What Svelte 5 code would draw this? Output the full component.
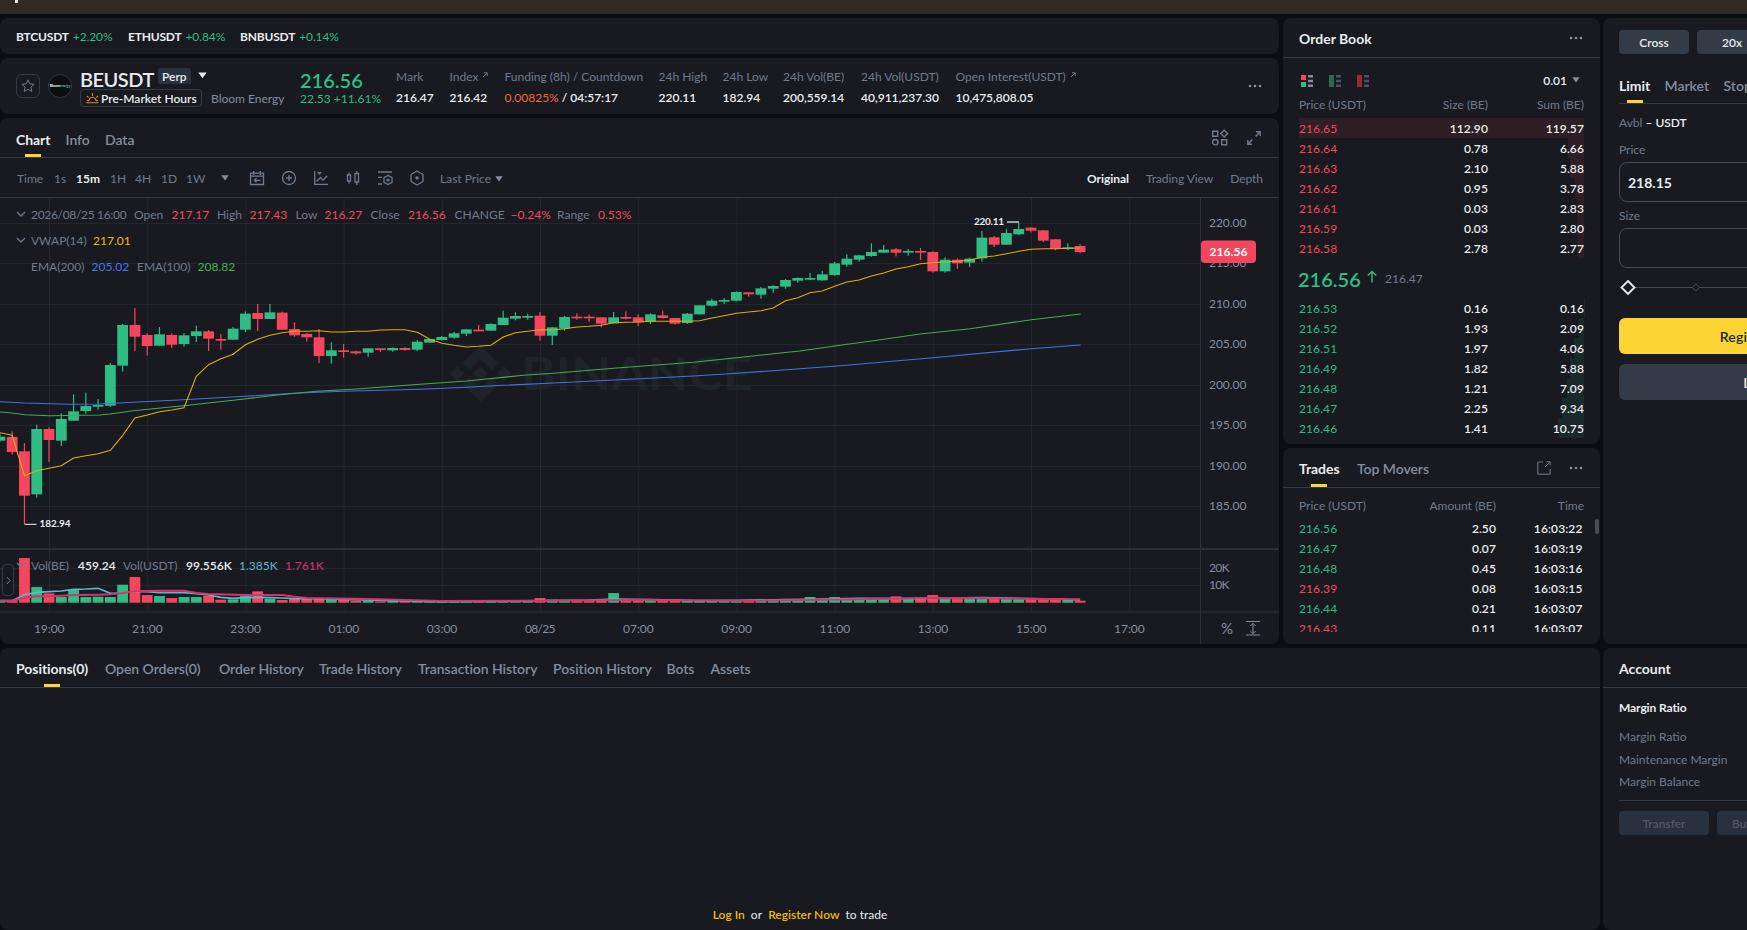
<script>
	const tickers = [
		{ name: 'BTCUSDT', change: '+2.20%' },
		{ name: 'ETHUSDT', change: '+0.84%' },
		{ name: 'BNBUSDT', change: '+0.14%' },
	]

	const stats = [
		{ label: 'Mark', value: '216.47' },
		{ label: 'Index', value: '216.42', link: true },
		{ label: 'Funding (8h) / Countdown', value: '/ 04:57:17', rate: '0.00825%' },
		{ label: '24h High', value: '220.11' },
		{ label: '24h Low', value: '182.94' },
		{ label: '24h Vol(BE)', value: '200,559.14' },
		{ label: '24h Vol(USDT)', value: '40,911,237.30' },
		{ label: 'Open Interest(USDT)', value: '10,475,808.05', link: true },
	]

	const intervals = ['Time', '1s', '15m', '1H', '4H', '1D', '1W']
	const history_tabs = ['Positions(0)', 'Open Orders(0)', 'Order History', 'Trade History', 'Transaction History', 'Position History', 'Bots', 'Assets']

	const asks = [
		{ price: '216.65', size: '112.90', sum: '119.57', depth: 285 },
		{ price: '216.64', size: '0.78', sum: '6.66', depth: 16 },
		{ price: '216.63', size: '2.10', sum: '5.88', depth: 14 },
		{ price: '216.62', size: '0.95', sum: '3.78', depth: 9 },
		{ price: '216.61', size: '0.03', sum: '2.83', depth: 7 },
		{ price: '216.59', size: '0.03', sum: '2.80', depth: 7 },
		{ price: '216.58', size: '2.78', sum: '2.77', depth: 7 },
	]
	const bids = [
		{ price: '216.53', size: '0.16', sum: '0.16', depth: 0.4 },
		{ price: '216.52', size: '1.93', sum: '2.09', depth: 5 },
		{ price: '216.51', size: '1.97', sum: '4.06', depth: 10 },
		{ price: '216.49', size: '1.82', sum: '5.88', depth: 14 },
		{ price: '216.48', size: '1.21', sum: '7.09', depth: 17 },
		{ price: '216.47', size: '2.25', sum: '9.34', depth: 22 },
		{ price: '216.46', size: '1.41', sum: '10.75', depth: 26 },
	]
	const trades = [
		{ price: '216.56', amount: '2.50', time: '16:03:22', side: 'up' },
		{ price: '216.47', amount: '0.07', time: '16:03:19', side: 'up' },
		{ price: '216.48', amount: '0.45', time: '16:03:16', side: 'up' },
		{ price: '216.39', amount: '0.08', time: '16:03:15', side: 'down' },
		{ price: '216.44', amount: '0.21', time: '16:03:07', side: 'up' },
		{ price: '216.43', amount: '0.11', time: '16:03:07', side: 'down' },
	]

	// candles: direction, body top, body bottom, wick top, wick bottom
	// vertical values are thirds of a pixel, Y() brings them into the svg
	const candles = [
		['G', 740, 752, 732, 755], ['R', 741, 786, 724, 794], ['R', 784, 917, 759, 1002], ['G', 717, 913, 704, 923],
		['R', 717, 750, 712, 816], ['G', 687, 752, 670, 768], ['G', 664, 692, 613, 692], ['G', 648, 663, 608, 671],
		['G', 645, 650, 627, 659], ['G', 525, 647, 519, 651], ['G', 405, 527, 402, 545], ['R', 405, 440, 354, 483],
		['R', 435, 468, 430, 497], ['G', 433, 467, 411, 467], ['R', 435, 464, 430, 474], ['G', 436, 462, 430, 470],
		['G', 424, 438, 407, 456], ['R', 424, 446, 420, 483], ['R', 447, 452, 432, 479], ['G', 416, 449, 411, 449],
		['G', 371, 419, 364, 426], ['R', 369, 387, 342, 423], ['G', 367, 387, 342, 387], ['R', 368, 419, 365, 419],
		['R', 417, 436, 397, 440], ['R', 432, 442, 429, 455], ['R', 442, 498, 417, 519], ['G', 481, 498, 457, 521],
		['R', 481, 486, 462, 503], ['R', 484, 490, 482, 494], ['G', 475, 488, 475, 501], ['R', 475, 480, 475, 485],
		['G', 474, 481, 472, 485], ['R', 474, 480, 472, 482], ['G', 455, 479, 450, 483], ['G', 447, 458, 447, 458],
		['G', 441, 450, 438, 452], ['G', 430, 443, 426, 446], ['G', 418, 431, 418, 438], ['R', 419, 424, 405, 424],
		['G', 402, 422, 400, 422], ['G', 383, 405, 362, 405], ['G', 378, 386, 367, 391], ['G', 378, 383, 371, 389],
		['R', 377, 437, 366, 452], ['G', 412, 437, 412, 465], ['G', 381, 416, 378, 422], ['R', 380, 385, 370, 389],
		['R', 380, 385, 373, 395], ['R', 382, 401, 382, 412], ['G', 382, 400, 366, 400], ['R', 381, 386, 364, 389],
		['R', 382, 397, 373, 408], ['G', 373, 396, 370, 402], ['R', 376, 384, 362, 386], ['R', 384, 401, 384, 404],
		['G', 371, 399, 369, 402], ['G', 346, 373, 346, 373], ['G', 332, 347, 326, 350], ['G', 330, 335, 324, 342],
		['G', 306, 332, 304, 334], ['R', 307, 313, 307, 320], ['G', 295, 314, 291, 326], ['G', 288, 296, 286, 308],
		['G', 270, 290, 267, 296], ['G', 264, 272, 262, 278], ['G', 264, 269, 249, 270], ['G', 253, 271, 243, 272],
		['G', 220, 255, 216, 257], ['G', 206, 224, 193, 230], ['G', 196, 209, 195, 215], ['G', 186, 198, 160, 200],
		['G', 179, 188, 165, 189], ['R', 178, 188, 174, 199], ['G', 183, 188, 177, 197], ['R', 183, 188, 174, 210],
		['R', 186, 244, 184, 248], ['G', 209, 244, 202, 248], ['R', 209, 220, 205, 237], ['G', 206, 218, 203, 231],
		['G', 143, 205, 123, 215], ['R', 142, 164, 138, 171], ['G', 129, 164, 118, 165], ['G', 117, 133, 97, 135],
		['R', 113, 122, 111, 127], ['R', 121, 152, 120, 156], ['R', 148, 176, 147, 181], ['G', 172, 177, 160, 180],
		['R', 168, 186, 163, 190],
	]

	const vwap = [728, 736, 857, 842, 835, 827, 804, 797, 791, 781, 736, 684, 675, 665, 660, 653, 559, 524, 506, 493, 464, 448, 436, 428, 424, 424, 422, 426, 426, 424, 424, 420, 419, 419, 427, 447, 460, 466, 471, 469, 466, 441, 428, 424, 419, 420, 416, 411, 409, 406, 398, 397, 396, 394, 394, 394, 394, 392, 384, 377, 370, 366, 362, 354, 332, 323, 308, 303, 289, 276, 270, 258, 249, 237, 230, 221, 218, 216, 214, 211, 202, 198, 191, 184, 178, 176, 176, 175, 174]
	const ema200 = [[0, 635], [74, 639], [150, 641], [210, 643], [300, 642], [370, 638], [550, 629], [735, 619], [880, 610], [1030, 604], [1260, 598], [1400, 592], [1510, 586], [1660, 579], [1920, 566], [2080, 558], [2210, 550], [2320, 542], [2520, 527], [2799, 503], [3094, 476], [3242, 465]]
	const ema100 = [[0, 666], [37, 669], [74, 674], [150, 677], [250, 676], [300, 675], [330, 672], [400, 662], [550, 647], [700, 631], [840, 614], [950, 604], [1060, 598], [1260, 583], [1400, 573], [1570, 556], [1660, 550], [1850, 534], [1920, 529], [2080, 517], [2210, 503], [2320, 491], [2400, 483], [2520, 466], [2615, 453], [2760, 432], [2910, 416], [3094, 389], [3242, 372]]

	const volume = [
		5, 8, 134, 47, 28, 17, 39, 17, 18, 17, 54, 77, 23, 20, 14, 17, 17, 21, 9, 10, 20, 34, 12, 8, 11, 12, 12, 11, 9, 6,
		7, 4, 6, 4, 5, 5, 4, 4, 5, 5, 5, 7, 6, 5, 14, 9, 8, 8, 9, 10, 29, 10, 9, 8, 9, 10, 8, 7, 6, 8,
		7, 8, 6, 8, 7, 8, 17, 9, 17, 14, 11, 12, 10, 19, 11, 16, 23, 12, 13, 11, 16, 14, 12, 13, 12, 11, 10, 10, 6,
	]
	const vol_fast = [[0, 212], [1, 212], [2, 194], [3, 187], [4, 185], [5, 183], [6, 178], [7, 177], [8, 175], [9, 190], [10, 189], [11, 184], [12, 185], [13, 188], [15, 188], [16, 191], [17, 195], [18, 202], [19, 205], [20, 203], [21, 202], [22, 203], [23, 204], [24, 206], [27, 207], [28, 208], [30, 210], [32, 212], [36, 215], [40, 214], [44, 212], [48, 210], [50, 207], [53, 209], [57, 212], [60, 211], [64, 209], [66, 208], [70, 205], [75, 206], [80, 203], [84, 206], [86, 207], [88, 210]]
	const vol_slow = [[0, 212], [1, 212], [2, 203], [3, 199], [4, 199], [5, 197], [6, 195], [8, 194], [9, 193], [10, 189], [11, 184], [12, 183], [13, 182], [15, 182], [16, 189], [17, 192], [20, 195], [23, 195], [24, 200], [25, 204], [30, 207], [36, 213], [44, 212], [52, 210], [60, 212], [66, 210], [70, 208], [76, 204], [80, 205], [88, 208]]

	const STEP = 12.275
	const X = (i) => i * STEP - 0.1
	const Y = (v) => v / 3 - 8
	const V = (v) => v / 3 + 332

	const line = (pts) => pts.map(([x, y]) => `${x.toFixed(1)},${y.toFixed(1)}`).join(' ')

	const price_labels = ['220.00', '215.00', '210.00', '205.00', '200.00', '195.00', '190.00', '185.00']
	const time_labels = ['19:00', '21:00', '23:00', '01:00', '03:00', '08/25', '07:00', '09:00', '11:00', '13:00', '15:00', '17:00']
	const grid_x = (i) => 49.5 + i * 98.2
	const grid_y = (i) => Math.round(25 + i * 40.43) + 0.5
</script>

{#snippet dots()}
	<svg class="dots" width="14" height="4" viewBox="0 0 14 4"><circle cx="2" cy="2" r="1.3" /><circle cx="7" cy="2" r="1.3" /><circle cx="12" cy="2" r="1.3" /></svg>
{/snippet}

{#snippet caret()}
	<svg class="caret" width="8" height="6" viewBox="0 0 8 6"><path d="M0.3 0.3h7.4L4 5.5z" /></svg>
{/snippet}

{#snippet book_row(row, side)}
	<div class="row book">
		<i class="depth {side}" style="width: {row.depth}px"></i>
		<span class="{side}">{row.price}</span>
		<span>{row.size}</span>
		<span>{row.sum}</span>
	</div>
{/snippet}

<div class="app">
	<div class="banner"><i></i></div>
	<div class="columns">
		<div class="left">
			<div class="upper">
				<div class="market">
					<section class="panel tickers">
						{#each tickers as t}
							<div><b>{t.name}</b><span class="up">{t.change}</span></div>
						{/each}
					</section>

					<section class="panel symbol">
						<div class="star">
							<svg width="16" height="16" viewBox="0 0 16 16"><path d="M8 1.8l1.8 4 4.4.5-3.3 2.9.9 4.3L8 11.3l-3.8 2.2.9-4.3-3.3-2.9 4.4-.5z" /></svg>
						</div>
						<div class="coin"><span>Bloom<em>energy</em></span></div>
						<div class="name">
							<div class="title"><h1>BEUSDT</h1><span class="perp">Perp</span>{@render caret()}</div>
							<div class="sub">
								<span class="hours">
									<svg width="13" height="12" viewBox="0 0 13 12"><path d="M.5 10.8h12M1.2 8.6h1.6l.9-1.8a3.3 3.3 0 0 1 5.6 0l.9 1.8h1.6M6.5 4V1M2.6 5.6L.9 3.9M10.4 5.6l1.7-1.7" /></svg>
									Pre-Market Hours
								</span>
								<span class="company">Bloom Energy</span>
							</div>
						</div>
						<div class="last up">
							<strong>216.56</strong>
							<span>22.53 +11.61%</span>
						</div>
						<div class="stats">
							{#each stats as s}
								<div class="stat">
									<label>{s.label}{#if s.link}<svg width="6" height="6" viewBox="0 0 6 6"><path d="M1 5l4-4M2 .8h3.2V4" /></svg>{/if}</label>
									<span>{#if s.rate}<em>{s.rate}</em>{' '}{/if}{s.value}</span>
								</div>
							{/each}
						</div>
						{@render dots()}
					</section>

					<section class="panel chart">
						<div class="head">
							<div class="tabs chart-tabs"><span class="on">Chart</span><span>Info</span><span>Data</span></div>
							<div class="tools">
								<svg width="18" height="18" viewBox="0 0 18 18"><path d="M1.7 2.2h5v5h-5zM10.7 10.7h5v5h-5z" /><circle cx="4.3" cy="13.2" r="2.7" /><path d="M13.2 1.2l3.4 3.4-3.4 3.4-3.4-3.4z" /></svg>
								<svg width="16" height="16" viewBox="0 0 16 16"><path d="M9.6 6.4L14 2M10 1.8h4.2V6M6.4 9.6L2 14M1.8 10v4.2H6" /></svg>
							</div>
						</div>
						<div class="toolbar">
							<div class="intervals">
								{#each intervals as t}
									<span class:on={t === '15m'}>{t}</span>
								{/each}
								{@render caret()}
							</div>
							<div class="icons">
								<svg viewBox="0 0 16 16"><path d="M1.5 3.2h13v11.3h-13zM1.5 6.2h13M4.6 1v4M11.4 1v4M11.5 10.3h-6M7.5 8.2l-2.1 2.1 2.1 2.1" /></svg>
								<svg viewBox="0 0 16 16"><circle cx="8" cy="8" r="6.5" /><path d="M8 5v6M5 8h6" /></svg>
								<svg viewBox="0 0 16 16"><path d="M1.7 1v13.4H15M3.5 11.5l4-4 2.4 2.6 4.4-4.4" /><path class="fill" d="M4 2h5L6.5 5z" /></svg>
								<svg viewBox="0 0 16 16"><path d="M2.5 5h3v6h-3zM4 2.5V5M4 11v2.5M10 3.5h3.5v8.5H10zM11.8 1v2.5M11.8 12v3" /></svg>
								<svg viewBox="0 0 16 16"><path d="M1 2h14M1 7.4h4M1 14h4" class="wide" /><path d="M11 5.4l4 2.3v4.6l-4 2.3-4-2.3V7.7z" /><circle class="fill" cx="11" cy="10" r="1.6" /></svg>
								<svg viewBox="0 0 16 16"><path d="M8 1l6 3.5v7L8 15l-6-3.5v-7z" /><circle class="fill" cx="8" cy="8" r="1.7" /></svg>
							</div>
							<span class="basis">Last Price {@render caret()}</span>
							<div class="views"><span class="on">Original</span><span>Trading View</span><span>Depth</span></div>
						</div>

						<div class="plot">
							<svg class="canvas" width="1279" height="446" viewBox="0 0 1279 446">
								<g class="watermark">
									<path d="M480.5 147l18 18-7 7-11-11-11 11-7-7zM457 168l7 7.5-7 7.5-7-7.5zM480.5 168l7.5 7.5-7.5 7.5-7.5-7.5zM504 168l7 7.5-7 7.5-7-7.5zM462.5 186l7-7 11 11 11-11 7 7-18 18z" />
									<text x="521" y="192" textLength="232" lengthAdjust="spacingAndGlyphs">BINANCE</text>
								</g>
								<g class="grid">
									{#each time_labels as t, i}
										<line x1={grid_x(i)} x2={grid_x(i)} y1="0" y2="414" />
									{/each}
									{#each price_labels as p, i}
										<line x1="0" x2="1200" y1={grid_y(i)} y2={grid_y(i)} />
									{/each}
									<line x1="0" x2="1200" y1="370.5" y2="370.5" />
									<line x1="0" x2="1200" y1="387.5" y2="387.5" />
								</g>
								<g class="axis">
									<rect x="0" y="350" width="1279" height="2" />
									<rect x="0" y="413.5" width="1279" height="1" />
									<rect x="1200" y="0" width="1" height="446" />
								</g>

								{#each candles as [dir, top, bottom, high, low], i}
									<g class={dir}>
										<rect x={X(i) - 0.6} y={Y(high)} width="1.2" height={(low - high) / 3} />
										<rect x={X(i) - 5.4} y={Y(top)} width="10.8" height={(bottom - top) / 3} />
										<rect x={X(i) - 5.4} y={404.7 - volume[i] / 3} width="10.8" height={volume[i] / 3} />
									</g>
								{/each}

								<polyline class="ema200" points={line(ema200.map(([x, v]) => [x / 3, Y(v)]))} />
								<polyline class="ema100" points={line(ema100.map(([x, v]) => [x / 3, Y(v)]))} />
								<polyline class="vwap" points={line(vwap.map((v, i) => [X(i), Y(v)]))} />
								<polyline class="fast" points={line(vol_fast.map(([i, v]) => [X(i), V(v)]))} />
								<polyline class="slow" points={line(vol_slow.map(([i, v]) => [X(i), V(v)]))} />

								<g class="marks">
									<path d="M1007 24h12M24.5 326.3h12" />
									<text x="974" y="27" textLength="30">220.11</text>
									<text x="39.5" y="329" textLength="31">182.94</text>
								</g>
								<g class="labels">
									{#each price_labels as p, i}
										<text x="1209" y={grid_y(i) + 3.2} textLength="37.5">{p}</text>
									{/each}
									<text x="1209" y="374" textLength="20.5">20K</text>
									<text x="1209" y="391" textLength="20.5">10K</text>
									{#each time_labels as t, i}
										<text x={grid_x(i) - 15.6} y="435" textLength="30.6">{t}</text>
									{/each}
									<text class="pct" x="1221" y="436">%</text>
									<path d="M1246 423.5h14M1246 437h14M1253 425.5v10M1250.3 428l2.7-2.7 2.7 2.7M1250.3 433l2.7 2.7 2.7-2.7" />
								</g>
								<g class="price-tag">
									<rect x="1201" y="42.5" width="55" height="22.5" rx="4" />
									<text x="1209.5" y="58" textLength="38">216.56</text>
								</g>
							</svg>

							<div class="legend">
								<div class="ohlc">
									<svg width="10" height="6" viewBox="0 0 10 6"><path d="M1 1l4 4 4-4" /></svg>
									<span class="date">2026/08/25 16:00</span>
									<span>Open</span><span class="down">217.17</span>
									<span>High</span><span class="down">217.43</span>
									<span>Low</span><span class="down">216.27</span>
									<span>Close</span><span class="down">216.56</span>
									<span>CHANGE</span><span class="down">−0.24%</span>
									<span>Range</span><span class="down">0.53%</span>
								</div>
								<div class="vw">
									<svg width="10" height="6" viewBox="0 0 10 6"><path d="M1 1l4 4 4-4" /></svg>
									<span>VWAP(14)</span><span class="yellow">217.01</span>
								</div>
								<div class="em">
									<i></i><span>EMA(200)</span><span class="blue">205.02</span><span>EMA(100)</span><span class="green">208.82</span>
								</div>
							</div>
							<div class="legend vol">
								<svg width="10" height="6" viewBox="0 0 10 6"><path d="M1 1l4 4 4-4" /></svg>
								<span>Vol(BE)</span><span class="white">459.24</span><span>Vol(USDT)</span><span class="white">99.556K</span><span class="cyan">1.385K</span><span class="pink">1.761K</span>
							</div>
							<div class="drawer">
								<svg width="5" height="9" viewBox="0 0 5 9"><path d="M1 1l3 3.5L1 8" /></svg>
							</div>
						</div>
					</section>
				</div>

				<div class="side">
					<section class="panel orderbook">
						<div class="head"><h2>Order Book</h2>{@render dots()}</div>
						<div class="modes">
							<svg width="12" height="12" viewBox="0 0 12 12"><path fill="#f6465d" d="M0 0h5v5H0z" /><path fill="#2ebd85" d="M0 7h5v5H0z" /><path fill="#848e9c" d="M7 0h5v2.4H7zM7 4.8h5v2.4H7zM7 9.6h5V12H7z" /></svg>
							<svg class="dim" width="12" height="12" viewBox="0 0 12 12"><path fill="#2ebd85" d="M0 0h5v12H0z" /><path fill="#848e9c" d="M7 0h5v2.4H7zM7 4.8h5v2.4H7zM7 9.6h5V12H7z" /></svg>
							<svg class="dim" width="12" height="12" viewBox="0 0 12 12"><path fill="#f6465d" d="M0 0h5v12H0z" /><path fill="#848e9c" d="M7 0h5v2.4H7zM7 4.8h5v2.4H7zM7 9.6h5V12H7z" /></svg>
							<span class="tick">0.01 {@render caret()}</span>
						</div>
						<div class="row book labels-row"><span>Price (USDT)</span><span>Size (BE)</span><span>Sum (BE)</span></div>
						{#each asks as row}
							{@render book_row(row, 'down')}
						{/each}
						<div class="mid">
							<strong class="up">216.56</strong>
							<svg width="10" height="13" viewBox="0 0 10 13"><path d="M5 12.5V1.5M.8 5.6L5 1.4l4.2 4.2" /></svg>
							<span>216.47</span>
						</div>
						{#each bids as row}
							{@render book_row(row, 'up')}
						{/each}
					</section>

					<section class="panel trades">
						<div class="head">
							<div class="tabs trade-tabs"><span class="on">Trades</span><span>Top Movers</span></div>
							<svg class="popout" width="14" height="14" viewBox="0 0 14 14"><path d="M6 1H.8v12.2h12.4V8M8 6l5-5M9.6.8h3.6v3.6" /></svg>
							{@render dots()}
						</div>
						<div class="row trade labels-row"><span>Price (USDT)</span><span>Amount (BE)</span><span>Time</span></div>
						<div class="feed">
							{#each trades as t}
								<div class="row trade"><span class={t.side}>{t.price}</span><span>{t.amount}</span><span>{t.time}</span></div>
							{/each}
							<i class="thumb"></i>
						</div>
					</section>
				</div>
			</div>

			<section class="panel positions">
				<div class="head">
					<div class="tabs history-tabs">
						{#each history_tabs as t, i}
							<span class:on={i === 0}>{t}</span>
						{/each}
					</div>
				</div>
				<p class="login"><b>Log In</b> <span>or</span> <b>Register Now</b> <span>to trade</span></p>
			</section>
		</div>

		<div class="right">
			<section class="panel order">
				<div class="leverage"><button>Cross</button><button>20x</button><button>S</button></div>
				<div class="types"><span class="on">Limit</span><span>Market</span><span>Stop Limit</span></div>
				<p class="avbl">Avbl <b>– USDT</b></p>
				<p class="field">Price</p>
				<div class="input">218.15</div>
				<p class="field size">Size</p>
				<div class="input"></div>
				<svg class="slider" width="288" height="16" viewBox="0 0 288 16">
					<path d="M16 8.5h256" />
					{#each [1, 2, 3, 4] as n}
						<path class="stop" d="M{9 + n * 67.8} 5l3.5 3.5-3.5 3.5-3.5-3.5z" />
					{/each}
					<path class="knob" d="M9 2l6.5 6.5L9 15 2.5 8.5z" />
				</svg>
				<button class="register">Register Now</button>
				<button class="signin">Log In</button>
			</section>

			<section class="panel account">
				<div class="head"><h2>Account</h2></div>
				<div class="margin">
					<b>Margin Ratio</b>
					<p>Margin Ratio</p>
					<p>Maintenance Margin</p>
					<p>Margin Balance</p>
				</div>
				<div class="actions"><button>Transfer</button><button>Buy Crypto</button><button>Swap</button></div>
			</section>
		</div>
	</div>
</div>

<style>
	:global(body) {
		background: #0b0e11;
		overflow: hidden;
	}
	.app {
		width: 1747px;
		height: 930px;
		overflow: hidden;
		background: #0b0e11;
		color: #eaecef;
		font: 12px/16px Lato, "Liberation Sans", sans-serif;
	}
	h1, h2, p, label, button {
		margin: 0;
		padding: 0;
		border: 0;
		font: inherit;
		color: inherit;
	}
	em, i {
		font-style: normal;
	}
	svg {
		flex: none;
		fill: none;
		stroke: #707a8a;
	}
	.up { color: #2ebd85; }
	.down { color: #f6465d; }
	.banner {
		height: 14px;
		padding-left: 15px;
		background: #302c22;
	}
	.banner i {
		display: block;
		width: 3px;
		height: 3px;
		background: #eaecef;
	}
	.columns {
		display: flex;
		gap: 3px;
		padding-top: 4px;
		height: 912px;
	}
	.left {
		width: 1600px;
		flex: none;
		display: flex;
		flex-direction: column;
		gap: 4px;
	}
	.upper {
		display: flex;
		gap: 4px;
		height: 626px;
	}
	.market {
		width: 1279px;
		display: flex;
		flex-direction: column;
		gap: 4px;
	}
	.side {
		width: 317px;
		display: flex;
		flex-direction: column;
		gap: 4px;
	}
	.panel {
		box-sizing: border-box;
		background: #181a20;
		border-radius: 8px;
		overflow: hidden;
	}
	.head {
		box-sizing: border-box;
		height: 40px;
		padding: 0 17px 0 16px;
		display: flex;
		align-items: center;
		border-bottom: 1px solid #333b47;
	}
	h2 {
		font-size: 14px;
		font-weight: 700;
		padding-top: 3px;
	}
	.dots {
		margin-left: auto;
		fill: #848e9c;
		stroke: none;
	}
	.caret {
		fill: #848e9c;
		stroke: none;
	}
	.tabs {
		display: grid;
		align-self: stretch;
		align-items: center;
		font-size: 14px;
		font-weight: 600;
		color: #848e9c;
	}
	.tabs span {
		position: relative;
		justify-self: start;
		padding-top: 2px;
		line-height: 37px;
		letter-spacing: -0.05px;
		white-space: nowrap;
	}
	.on {
		color: #eaecef;
		font-weight: 700;
	}
	.tabs .on::after,
	.types .on::after {
		content: "";
		position: absolute;
		left: calc(50% - 8px);
		bottom: 0;
		width: 16px;
		height: 3px;
		background: #fcd535;
	}

	/* tickers and symbol header */
	.tickers {
		height: 36px;
		padding: 2px 16px 0;
		display: grid;
		grid-template-columns: 112px 112px auto;
		align-items: center;
	}
	.tickers b {
		font-weight: 700;
		letter-spacing: -0.2px;
		margin-right: 4px;
	}
	.tickers span { letter-spacing: -0.1px; }
	.symbol {
		height: 56px;
		padding: 0 17px 0 16px;
		display: flex;
		align-items: center;
	}
	.star, .coin {
		box-sizing: border-box;
		width: 24px;
		height: 24px;
		flex: none;
		border: 1px solid #333b47;
		border-radius: 6px;
		display: flex;
		align-items: center;
		justify-content: center;
	}
	.star {
		margin-right: 8px;
	}
	.coin {
		margin-right: 8px;
		border-radius: 50%;
		background: #0b0e11;
		font-size: 4px;
		font-weight: 700;
		line-height: 6px;
		letter-spacing: -0.3px;
	}
	.coin em { color: #2ebd85; }
	.name {
		width: 220px;
		padding-top: 3px;
	}
	.title {
		display: flex;
		align-items: center;
		height: 20px;
	}
	h1 {
		width: 78px;
		font-size: 20px;
		line-height: 20px;
		font-weight: 600;
		letter-spacing: -0.5px;
		padding-top: 3px;
	}
	.perp {
		height: 16px;
		margin: -3px 8px 0 0;
		padding: 0 4px;
		border-radius: 2px;
		background: #29313d;
		font-weight: 600;
		line-height: 18px;
	}
	.title .caret {
		width: 9px;
		height: 7px;
		margin: -3px 0 0 -1px;
		fill: #eaecef;
	}
	.sub {
		display: flex;
		align-items: center;
		gap: 9px;
		height: 20px;
		margin-top: 1px;
	}
	.hours {
		box-sizing: border-box;
		width: 122px;
		height: 18px;
		padding: 2px 0 0 5px;
		border: 1px solid #333b47;
		border-radius: 4px;
		display: flex;
		align-items: center;
		gap: 2px;
		font-weight: 600;
		white-space: nowrap;
	}
	.hours svg {
		margin-top: -2px;
		stroke: #e08a1e;
		stroke-width: 1.1;
	}
	.company {
		padding-top: 2px;
		color: #848e9c;
	}
	.last {
		width: 96px;
		padding-top: 3px;
		display: flex;
		flex-direction: column;
	}
	.last strong, .mid strong {
		font-size: 20px;
		line-height: 22px;
		font-weight: 600;
	}
	.stats {
		display: grid;
		grid-template-columns: 53.5px 55px 154px 64px 60.5px 78px 94.5px auto;
		padding-top: 2px;
	}
	.stat {
		display: flex;
		flex-direction: column;
		gap: 5px;
		white-space: nowrap;
	}
	.stat label { color: #707a8a; }
	.stat label svg {
		margin-left: 4px;
		vertical-align: 3px;
	}
	.stat span { font-weight: 600; }
	.stat em {
		color: #f0683c;
		font-weight: 400;
	}

	/* chart */
	.chart { flex: 1; }
	.chart-tabs { grid-template-columns: 49.5px 39.5px auto; }
	.chart-tabs span {
		padding-top: 4px;
		line-height: 35px;
	}
	.tools {
		margin-left: auto;
		display: flex;
		align-items: center;
		gap: 17px;
		stroke-width: 1.4;
	}
	.toolbar {
		box-sizing: border-box;
		height: 40px;
		padding: 0 16px 0 17px;
		display: flex;
		align-items: center;
		color: #707a8a;
		border-bottom: 1px solid #333b47;
	}
	.intervals {
		display: grid;
		grid-template-columns: 37px 22px 34px 25px 26px 25px 35px 28px;
		align-items: center;
	}
	.toolbar span { padding-top: 2px; }
	.icons {
		display: flex;
		gap: 16px;
		margin-right: 15px;
	}
	.icons svg {
		width: 16px;
		height: 16px;
		stroke-width: 1.3;
	}
	.icons .fill {
		fill: #707a8a;
		stroke: none;
	}
	.basis .caret { margin: 0 0 1px 1px; }
	.views {
		margin-left: auto;
		display: flex;
		gap: 17px;
	}
	.views span { letter-spacing: -0.05px; }
	.plot {
		position: relative;
		height: 446px;
	}
	.canvas {
		display: block;
		stroke: none;
	}
	.watermark { fill: #1e2329; }
	.watermark text {
		font-size: 46px;
		font-weight: 700;
	}
	.grid line { stroke: #22262d; }
	.axis rect { fill: #2b3139; }
	.G { fill: #2ebd85; }
	.R { fill: #f6465d; }
	polyline { stroke-width: 1.1; }
	.vwap { stroke: #e2ad0c; }
	.ema200 { stroke: #4073e6; }
	.ema100 { stroke: #4aa84d; }
	.fast { stroke: #5bb9cf; stroke-width: 1.7; }
	.slow { stroke: #d6336c; stroke-width: 2; }
	.marks {
		fill: #eaecef;
		font-size: 10px;
		font-weight: 700;
	}
	.marks path {
		stroke: #c8cacd;
		stroke-width: 1.3;
	}
	.labels { fill: #848e9c; }
	.labels text { font-size: 12px; }
	.labels .pct { font-size: 15px; }
	.labels path {
		fill: none;
		stroke: #848e9c;
	}
	.price-tag rect { fill: #f6465d; }
	.price-tag text {
		fill: #fff;
		font-weight: 700;
	}
	.legend {
		position: absolute;
		left: 16px;
		top: 9px;
		color: #707a8a;
		white-space: nowrap;
	}
	.legend div {
		display: grid;
		align-items: center;
		height: 26px;
		line-height: 16px;
	}
	.legend svg { margin-top: -3px; stroke-width: 1.3; }
	.legend .ohlc { grid-template-columns: 15px 103px 37.5px 45.5px 32.5px 46px 29px 46px 37.5px 46.5px 56px 46.5px 41px auto; margin-top: -5px; }
	.legend .vw { grid-template-columns: 15px 62px auto; }
	.legend .em { grid-template-columns: 15px 60.5px 45.5px 60.5px auto; }
	.date { letter-spacing: -0.32px; }
	.vol {
		top: 360px;
		display: grid;
		grid-template-columns: 15px 47px 45px 63px 53px 46px auto;
		align-items: center;
	}
	.yellow { color: #f0b90b; }
	.blue { color: #4278f0; }
	.green { color: #4caf50; }
	.white { color: #eaecef; font-weight: 600; }
	.cyan { color: #5bb9cf; }
	.pink { color: #d6336c; }
	.drawer {
		position: absolute;
		left: 2px;
		top: 366px;
		box-sizing: border-box;
		width: 12px;
		height: 32px;
		border: 1px solid #333b47;
		border-radius: 4px;
		background: #181a20;
		display: flex;
		align-items: center;
		justify-content: center;
	}

	/* order book and trades */
	.orderbook { height: 426px; }
	.modes {
		height: 36px;
		margin: 4px 20px 0 18px;
		padding-top: 1px;
		box-sizing: border-box;
		display: flex;
		align-items: center;
		gap: 16px;
	}
	.modes svg { stroke: none; }
	.dim { opacity: 0.5; }
	.tick {
		margin-left: auto;
		font-weight: 600;
	}
	.tick .caret { margin: 0 0 2px 2px; }
	.row {
		position: relative;
		height: 20px;
		margin: 0 16px;
		display: grid;
		line-height: 21px;
		white-space: nowrap;
	}
	.row span {
		position: relative;
		font-weight: 600;
		text-align: right;
		letter-spacing: 0.1px;
	}
	.row span:nth-of-type(1) {
		font-weight: 400;
		text-align: left;
	}
	.book { grid-template-columns: 90px 99px 96px; }
	.trade { grid-template-columns: 90px 107px 86.5px; }
	.row.labels-row span {
		font-weight: 400;
		color: #707a8a;
		letter-spacing: 0;
	}
	.orderbook .labels-row {
		height: 22px;
		margin-top: -2px;
		line-height: 17px;
	}
	.depth {
		position: absolute;
		right: 0;
		top: 0;
		height: 20px;
		opacity: 0.1;
	}
	.depth.down { background: #f6465d; }
	.depth.up { background: #2ebd85; }
	.mid {
		height: 40px;
		padding: 2px 16px 0;
		box-sizing: border-box;
		display: flex;
		align-items: center;
		color: #707a8a;
	}
	.mid strong {
		width: 69px;
		margin-left: -1px;
	}
	.mid svg {
		width: 10px;
		margin-right: 8px;
		stroke: #2ebd85;
		stroke-width: 1.4;
		margin-top: -5px;
	}
	.mid span { margin-top: -1px; }
	.trades { flex: 1; }
	.trade-tabs { grid-template-columns: 58px auto; }
	.popout { margin-left: auto; }
	.popout + :global(.dots) { margin-left: 18px; }
	.trades .labels-row {
		height: 31px;
		padding-top: 7px;
		box-sizing: border-box;
		grid-template-columns: 90px 107px 88px;
	}
	.feed {
		position: relative;
		height: 113px;
		overflow: hidden;
	}
	.feed .row { line-height: 19px; }
	.thumb {
		position: absolute;
		right: 1px;
		top: 0;
		width: 4px;
		height: 15px;
		border-radius: 2px;
		background: #474d57;
	}

	/* positions */
	.positions {
		flex: 1;
		display: flex;
		flex-direction: column;
	}
	.history-tabs { grid-template-columns: 89px 114px 100px 99px 135px 113.5px 44px auto; }
	.login {
		margin: auto 0 7px;
		padding-left: 3px;
		text-align: center;
	}
	.login b {
		font-weight: 600;
		color: #f0b90b;
	}
	.login span { margin: 0 3px; }

	/* order form */
	.right {
		width: 320px;
		flex: none;
		display: flex;
		flex-direction: column;
		gap: 4px;
	}
	.order {
		height: 626px;
		padding: 12px 16px;
		display: flex;
		flex-direction: column;
	}
	.leverage, .actions {
		display: flex;
		gap: 8px;
	}
	.leverage button, .actions button {
		width: 70px;
		height: 24px;
		padding-top: 2px;
		border-radius: 4px;
		background: #333b47;
		font-weight: 600;
	}
	.types {
		box-sizing: border-box;
		height: 34px;
		margin-top: 16px;
		display: grid;
		grid-template-columns: 45.5px 59px auto;
		border-bottom: 1px solid #333b47;
		font-size: 14px;
		font-weight: 600;
		line-height: 31px;
		color: #848e9c;
	}
	.types span {
		position: relative;
		justify-self: start;
	}
	.avbl {
		margin-top: 11px;
		color: #707a8a;
	}
	.avbl b {
		font-weight: 600;
		color: #eaecef;
	}
	.field {
		margin: 11px 0 4px;
		color: #707a8a;
	}
	.field.size { margin: 6px 0 4px; }
	.input {
		box-sizing: border-box;
		height: 40px;
		padding: 1px 8px 0;
		border: 1px solid #434c5a;
		border-radius: 8px;
		font-size: 14px;
		font-weight: 700;
		line-height: 38px;
	}
	.slider {
		margin-top: 11px;
		stroke: #434c5a;
	}
	.slider .stop { fill: #181a20; }
	.slider .knob {
		fill: #181a20;
		stroke: #eaecef;
		stroke-width: 1.8;
	}
	.register, .signin {
		height: 36px;
		flex: none;
		border-radius: 6px;
		font-size: 14px;
		font-weight: 600;
		letter-spacing: 0.2px;
		padding: 2px 1px 0 0;
	}
	.register {
		margin-top: 23px;
		background: #fcd535;
		color: #202630;
	}
	.signin {
		margin-top: 10px;
		background: #333b47;
	}

	/* account */
	.account { flex: 1; }
	.margin {
		height: 113px;
		margin: 0 16px 10px;
		padding-top: 12px;
		box-sizing: border-box;
		border-bottom: 1px solid #333b47;
		color: #707a8a;
	}
	.margin b {
		display: block;
		margin-bottom: 13px;
		color: #eaecef;
		letter-spacing: -0.1px;
	}
	.margin p { margin-bottom: 6.7px; }
	.actions { padding: 0 16px; }
	.actions button {
		width: 90px;
		flex: none;
		background: #29313d;
		color: #4f5867;
	}
</style>
